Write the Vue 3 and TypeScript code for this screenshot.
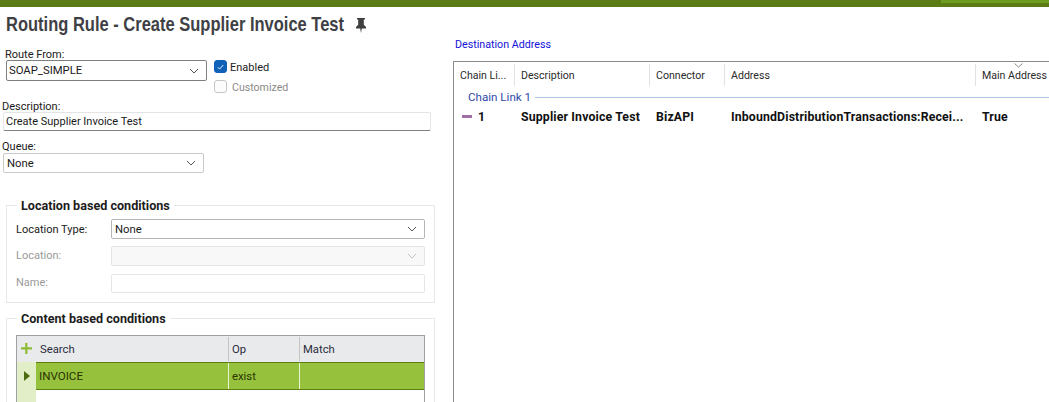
<script setup lang="ts">
const headers = [
  { label: 'Chain Li...', cls: 'c1' },
  { label: 'Description', cls: 'c2' },
  { label: 'Connector', cls: 'c3' },
  { label: 'Address', cls: 'c4' },
  { label: 'Main Address', cls: 'c5' },
]
</script>

<template>
  <div class="page">
    <div class="topbar"><div class="topbar-accent"></div></div>
    <div class="columns">
      <section class="left">
        <h1 class="title">
          <span class="title-box"><span class="title-text">Routing Rule - Create Supplier Invoice Test</span></span>
          <svg class="pin" viewBox="0 0 12 14" width="12" height="15" preserveAspectRatio="none">
            <path d="M2 0h8v1.4H8.8v4.8L11 8.4v1.3H6.8L6 14l-.8-4.3H1V8.4l2.2-2.2V1.4H2z" fill="#3f3f3f" />
          </svg>
        </h1>
        <div class="route-row">
          <div class="route-col">
            <label class="lbl">Route From:</label>
            <div class="select route-select">
              <span>SOAP_SIMPLE</span>
              <svg class="chev" viewBox="0 0 10 6" width="10" height="6"><path d="M1 1l4 4 4-4" /></svg>
            </div>
          </div>
          <div class="checks">
            <div class="check-row">
              <span class="box on">
                <svg viewBox="0 0 12 12" width="12" height="12"><path d="M3 6.3l2 2 4-4.5" fill="none" stroke="#fff" stroke-width="1" /></svg>
              </span>
              <span class="check-text">Enabled</span>
            </div>
            <div class="check-row off">
              <span class="box"></span>
              <span class="check-text cust">Customized</span>
            </div>
          </div>
        </div>
        <label class="lbl desc-lbl">Description:</label>
        <div class="input desc">Create Supplier Invoice Test</div>
        <label class="lbl queue-lbl">Queue:</label>
        <div class="select queue">
          <span>None</span>
          <svg class="chev" viewBox="0 0 10 6" width="10" height="6"><path d="M1 1l4 4 4-4" /></svg>
        </div>

        <fieldset class="group loc">
          <legend>Location based conditions</legend>
          <div class="form-row first">
            <span class="flabel">Location Type:</span>
            <div class="select grow strong">
              <span>None</span>
              <svg class="chev" viewBox="0 0 10 6" width="10" height="6"><path d="M1 1l4 4 4-4" /></svg>
            </div>
          </div>
          <div class="form-row disabled">
            <span class="flabel">Location:</span>
            <div class="select grow dis">
              <span></span>
              <svg class="chev light" viewBox="0 0 10 6" width="10" height="6"><path d="M1 1l4 4 4-4" /></svg>
            </div>
          </div>
          <div class="form-row disabled">
            <span class="flabel">Name:</span>
            <div class="input grow name"></div>
          </div>
        </fieldset>

        <fieldset class="group content">
          <legend>Content based conditions</legend>
          <div class="cond-grid">
            <div class="cond-head">
              <div class="ind plus">
                <svg viewBox="0 0 11 11" width="11" height="11"><path d="M4.200 0h2.200v4.300H11v2.200H6.400V11H4.200V6.500H0V4.300h4.200z" fill="#8dbb36" /></svg>
              </div>
              <div class="h-search">Search</div>
              <div class="h-op">Op</div>
              <div class="h-match">Match</div>
            </div>
            <div class="cond-row">
              <div class="ind arrow"><span class="tri"></span></div>
              <div class="cell-search">INVOICE</div>
              <div class="cell-op">exist</div>
              <div class="cell-match"></div>
            </div>
            <div class="cond-empty">
              <div class="ind"></div>
            </div>
          </div>
        </fieldset>
      </section>

      <section class="right">
        <div class="dest">Destination Address</div>
        <div class="dest-grid">
          <div class="dest-head">
            <div v-for="h in headers" :key="h.cls" class="dh" :class="h.cls">{{ h.label }}</div>
            <svg class="sort" viewBox="0 0 9 5" width="9" height="5"><path d="M0.500 0.500l4 3.500 4-3.500" /></svg>
          </div>
          <div class="chain-group">
            <span>Chain Link 1</span>
            <span class="chain-line"></span>
          </div>
          <div class="dest-row">
            <div class="c1 first-cell"><span class="bar"></span><span>1</span></div>
            <div class="c2">Supplier Invoice Test</div>
            <div class="c3">BizAPI</div>
            <div class="c4">InboundDistributionTransactions:Recei...</div>
            <div class="c5">True</div>
          </div>
        </div>
      </section>
    </div>
  </div>
</template>

<style>
html, body { margin: 0; background: #fff; }
</style>

<style scoped>
.page {
  width: 1049px;
  height: 402px;
  overflow: hidden;
  background: #fff;
  color: #1a1a1a;
  font-family: Roboto, "Noto Sans", sans-serif;
  font-size: 11px;
}
.topbar { height: 7px; background: #5b7c14; position: relative; }
.topbar-accent { position: absolute; right: 0; top: 0; width: 108px; height: 3px; background: #6f9c1e; }
.columns { display: flex; height: 395px; }
.left { width: 445px; flex: none; padding-left: 2px; box-sizing: border-box; }
.right { flex: 1; min-width: 0; padding-left: 8px; }
.title {
  margin: 6px 0 0 4px;
  height: 22px;
  display: flex;
  align-items: center;
  gap: 10px;
  font-family: "Liberation Sans", sans-serif;
  font-size: 20.5px;
  font-weight: 700;
  color: #3f3f46;
}
.title-box { width: 339px; flex: none; white-space: nowrap; }
.title-text { display: inline-block; transform: scaleX(0.805); transform-origin: left center; }
.pin { margin-top: 3px; }
.lbl { display: block; height: 12px; line-height: 14px; }
.route-row { display: flex; margin: 13px 0 0 3px; height: 44px; }
.route-col { width: 202px; }
.select, .input {
  box-sizing: border-box;
  display: flex;
  align-items: center;
  justify-content: space-between;
  background: #fff;
  border: 1px solid #c9c9c9;
  border-radius: 2px;
  padding: 0 7px 0 3px;
}
.route-select { margin: 0 0 0 1px; height: 21px; width: 201px; border-color: #7f7f7f; padding-left: 2px; font-size: 11.3px; }
.chev { fill: none; stroke: #555; stroke-width: 1; flex: none; }
.chev.light { stroke: #c4c4c4; }
.checks { margin-left: 7px; padding-top: 12px; }
.check-row { display: flex; align-items: center; height: 13px; gap: 3px; color: #222; }
.check-row.off { margin-top: 7px; color: #8a8a8a; gap: 5px; }
.check-text { position: relative; top: 1px; }
.cust { font-size: 10.6px; }
.box {
  box-sizing: border-box;
  width: 13px;
  height: 13px;
  border: 1px solid #c6c6c6;
  border-radius: 3px;
  display: inline-flex;
  align-items: center;
  justify-content: center;
  background: #fcfcfc;
}
.box.on { background: #0f62b8; border-color: #0f62b8; }
.desc-lbl { margin-top: 8px; }
.desc { margin: 0 0 0 1px; width: 428px; height: 19px; border-bottom-color: #808080; border-top-color: #e4e4e4; border-left-color: #e4e4e4; border-right-color: #e4e4e4; padding-left: 2px; }
.queue-lbl { margin-top: 9px; }
.queue { margin: 1px 0 0 1px; width: 201px; height: 20px; font-size: 11.3px; }
.group {
  box-sizing: border-box;
  margin: 0 0 0 4px;
  width: 429px;
  border: 1px solid #e8e8e8;
  padding: 0 9px;
  min-width: 0;
}
.group legend {
  font-weight: 700;
  color: #1c1c1c;
  font-size: 12.6px;
  line-height: 14px;
  padding: 2px 4px 0;
  margin-left: 1px;
}
.loc { margin-top: 24px; height: 106px; }
.form-row { display: flex; align-items: center; height: 20px; margin-top: 7px; }
.form-row.first { margin-top: 6px; }
.flabel { width: 95px; flex: none; }
.form-row.disabled .flabel { color: #9a9a9a; padding-bottom: 2px; box-sizing: border-box; }
.grow { flex: 1; height: 100%; }
.strong { border-color: #b5b5b5; font-size: 11.3px; }
.dis { background: #f8f8f8; border-color: #e3e3e3; }
.name { border-color: #e6e6e6; height: 19px; }
.content { margin-top: 7px; height: 120px; }
.cond-grid {
  box-sizing: border-box;
  margin-top: 9px;
  width: 409px;
  height: 80px;
  border: 1px solid #a0a0a0;
  border-bottom: none;
  font-size: 11.3px;
}
.cond-head { display: flex; height: 26px; background: #e9eaec; color: #2a2a3a; }
.ind { width: 19px; flex: none; display: flex; align-items: center; justify-content: center; }
.plus { background: #e9eaec; padding-bottom: 2px; box-sizing: border-box; }
.h-search { width: 193px; padding-left: 4px; box-sizing: border-box; display: flex; align-items: center; border-right: 1px solid #c4c4c4; height: 24px; margin-top: 1px; }
.h-op { width: 71px; padding-left: 3px; box-sizing: border-box; display: flex; align-items: center; border-right: 1px solid #c4c4c4; height: 24px; margin-top: 1px; }
.h-match { flex: 1; padding-left: 3px; display: flex; align-items: center; height: 24px; margin-top: 1px; }
.cond-row { display: flex; height: 28px; color: #2a3300; }
.arrow { background: #e2eec8; }
.tri { width: 0; height: 0; border-left: 6px solid #4e6b10; border-top: 5px solid transparent; border-bottom: 5px solid transparent; }
.cell-search, .cell-op, .cell-match {
  background: #95c13d;
  display: flex;
  align-items: center;
  box-sizing: border-box;
  border-top: 1px solid #5c7f14;
  border-bottom: 1px solid #5c7f14;
}
.cell-search { width: 193px; padding-left: 3px; box-shadow: inset -1px 0 0 #eaf3d6; font-size: 11.6px; }
.cell-op { width: 71px; padding-left: 3px; box-shadow: inset -1px 0 0 #eaf3d6; }
.cell-match { flex: 1; }
.cond-empty { display: flex; height: 30px; }
.cond-empty .ind { background: #e2eec8; }
.dest { margin: 31px 0 0 2px; height: 14px; line-height: 14px; color: #1212d8; font-size: 10.7px; }
.dest-grid {
  box-sizing: border-box;
  margin-top: 9px;
  height: 341px;
  border: 1px solid #8a8a8a;
  border-right: none;
  border-bottom: none;
}
.dest-head { display: flex; height: 26px; position: relative; color: #2a2a2a; font-size: 10.6px; }
.dh { display: flex; align-items: center; height: 22px; margin-top: 2px; box-sizing: border-box; border-right: 1px solid #e2e2e2; padding-left: 6px; }
.c1 { width: 61px; flex: none; }
.dh.c1 { padding-left: 6px; }
.c2 { width: 135px; flex: none; }
.c3 { width: 75px; flex: none; }
.c4 { width: 251px; flex: none; }
.c5 { flex: 1; border-right: none; white-space: nowrap; }
.sort { position: absolute; left: 560px; top: 1px; fill: none; stroke: #8a8a8a; stroke-width: 1; }
.chain-group { display: flex; align-items: center; height: 18px; padding-left: 14px; color: #2f4aa8; gap: 4px; font-size: 11.6px; }
.chain-line { flex: 1; height: 1px; background: #aec2e2; }
.dest-row { display: flex; align-items: center; height: 21px; font-weight: 700; color: #111; white-space: nowrap; font-size: 12.3px; letter-spacing: 0.15px; }
.dest-row > div { padding-left: 6px; box-sizing: border-box; overflow: hidden; }
.first-cell { display: flex; align-items: center; gap: 6px; padding-left: 8px !important; }
.bar { width: 10px; height: 3px; background: #a06fa5; }
</style>
